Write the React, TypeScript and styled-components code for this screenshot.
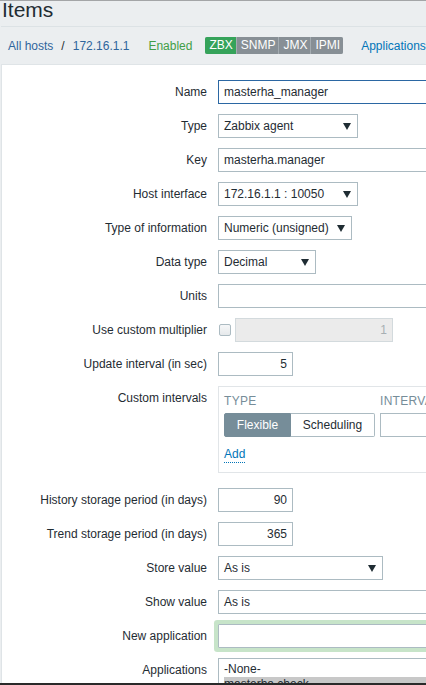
import React from 'react';
import styled, { createGlobalStyle } from 'styled-components';

const GlobalStyle = createGlobalStyle`
  html, body {
    margin: 0;
    padding: 0;
    background: #ebeef0;
    overflow: hidden;
  }
  body {
    font-family: "Liberation Sans", Arial, sans-serif;
    font-size: 12px;
    color: #1f2c33;
  }
`;

const Screen = styled.div`
  width: 426px;
  height: 683px;
  box-sizing: border-box;
  border-top: 1px solid #a3a5a7;
  background: #ebeef0;
  overflow: hidden;
  display: flex;
  flex-direction: column;
`;

const BottomEdge = styled.div`
  width: 426px;
  height: 2px;
  background: #2a2a2a;
`;

const PageHeader = styled.div`
  height: 25px;
  margin-left: 1px;
  border-bottom: 1px solid #dce2e5;
  flex-shrink: 0;
`;

const Title = styled.h1`
  margin: 0;
  padding-left: 1px;
  font-size: 21px;
  line-height: 17px;
  font-weight: normal;
  color: #1f2c33;
`;

const Breadcrumbs = styled.div`
  height: 37px;
  flex-shrink: 0;
  display: flex;
  align-items: center;
  padding-left: 8px;
  white-space: nowrap;
  & > * {
    flex-shrink: 0;
  }
`;

const Crumb = styled.a`
  color: #2f659c;
  text-decoration: none;
`;

const Separator = styled.span`
  margin: 0 8px;
  color: #1f2c33;
`;

const Status = styled.span`
  color: #429e47;
  margin-left: 19px;
`;

const BadgeGroup = styled.div`
  display: flex;
  margin-left: 13px;
  border-radius: 2px;
  overflow: hidden;
  background: #a4acb1;
`;

const Badge = styled.span<{ $active?: boolean }>`
  height: 17px;
  line-height: 17px;
  padding: 0 3px 0 4px;
  color: #fff;
  background: ${p => (p.$active ? '#35a35a' : '#878f95')};
  & + & {
    margin-left: 1px;
  }
`;

const NavLink = styled.a`
  margin-left: 18px;
  color: #0275b8;
  text-decoration: none;
`;

const Panel = styled.div`
  flex: 1;
  margin-left: 1px;
  background: #fff;
  border-left: 1px solid #dfe4e7;
  border-top: 1px solid #dfe4e7;
  padding-top: 15px;
`;

const Row = styled.div<{ $top?: boolean; $gap?: number }>`
  display: flex;
  align-items: ${p => (p.$top ? 'flex-start' : 'center')};
  margin-bottom: ${p => p.$gap ?? 10}px;
  white-space: nowrap;
`;

const Label = styled.label`
  width: 205px;
  flex-shrink: 0;
  margin-right: 11px;
  text-align: right;
  line-height: 24px;
  color: #1f2c33;
`;

const TextInput = styled.input<{ $w?: number; $right?: boolean; $focused?: boolean }>`
  box-sizing: border-box;
  flex-shrink: 0;
  height: 24px;
  width: ${p => (p.$w ? `${p.$w}px` : '480px')};
  padding: 0 5px;
  border: 1px solid ${p => (p.$focused ? '#2b67a3' : '#acbbc2')};
  background: #fff;
  font: inherit;
  color: #1f2c33;
  text-align: ${p => (p.$right ? 'right' : 'left')};
  outline: none;
  &:disabled {
    background: #ebebeb;
    border-color: #d3dadd;
    color: #a7afb3;
  }
`;

const GlowInput = styled(TextInput)`
  border-radius: 1px;
  box-shadow: 0 0 0 4px #c7e4c9;
`;

const Select = styled.div<{ $w?: number }>`
  box-sizing: border-box;
  flex-shrink: 0;
  height: 24px;
  width: ${p => (p.$w ? `${p.$w}px` : '480px')};
  display: flex;
  align-items: center;
  justify-content: space-between;
  padding: 0 6px 0 5px;
  border: 1px solid #acbbc2;
  background: #fff;
  color: #1f2c33;
`;

const Checkbox = styled.span`
  box-sizing: border-box;
  width: 12px;
  height: 12px;
  margin-left: 1px;
  border: 1px solid #acbbc2;
  border-radius: 2px;
  background: linear-gradient(#f6f7f8, #e6e9eb);
`;

const Spaced = styled.span`
  display: flex;
  margin-left: 4px;
`;

const IntervalBox = styled.div`
  box-sizing: border-box;
  width: 480px;
  flex-shrink: 0;
  border: 1px solid #e1e5e8;
  padding: 6px 5px 9px;
`;

const IntervalGrid = styled.div`
  display: grid;
  grid-template-columns: 151px 1fr;
  column-gap: 5px;
  row-gap: 4px;
`;

const ColHead = styled.div`
  line-height: 16px;
  color: #768d99;
  text-transform: uppercase;
  letter-spacing: 0.3px;
`;

const Segmented = styled.div`
  display: flex;
  height: 24px;
`;

const Segment = styled.span<{ $on?: boolean; $w: number }>`
  box-sizing: border-box;
  width: ${p => p.$w}px;
  height: 24px;
  line-height: 22px;
  text-align: center;
  border: 1px solid ${p => (p.$on ? '#768d99' : '#acbbc2')};
  background: ${p => (p.$on ? '#768d99' : '#fff')};
  color: ${p => (p.$on ? '#fff' : '#1f2c33')};
  &:first-child {
    border-radius: 2px 0 0 2px;
  }
  &:last-child {
    border-left: none;
    border-radius: 0 2px 2px 0;
  }
`;

const AddLink = styled.a`
  display: inline-block;
  margin-top: 10px;
  line-height: 15px;
  color: #0275b8;
  text-decoration: none;
  border-bottom: 1px dotted #0275b8;
`;

const ListBox = styled.div`
  box-sizing: border-box;
  width: 480px;
  height: 80px;
  flex-shrink: 0;
  border: 1px solid #acbbc2;
  padding: 3px 5px;
`;

const Option = styled.div<{ $selected?: boolean }>`
  line-height: 15px;
  background: ${p => (p.$selected ? '#c8c8c8' : 'transparent')};
`;

const Arrow = () => (
  <svg width="8" height="7" viewBox="0 0 8 7">
    <polygon points="0,0 8,0 4,7" fill="#1f2c33" />
  </svg>
);

const Dropdown: React.FC<{ value: string; w?: number; arrow?: boolean }> = ({ value, w, arrow = true }) => (
  <Select $w={w}>
    <span>{value}</span>
    {arrow && <Arrow />}
  </Select>
);

const App: React.FC = () => {
  return (
    <>
      <GlobalStyle />
      <Screen>
        <PageHeader>
          <Title>Items</Title>
        </PageHeader>
        <Breadcrumbs>
          <Crumb>All hosts</Crumb>
          <Separator>/</Separator>
          <Crumb>172.16.1.1</Crumb>
          <Status>Enabled</Status>
          <BadgeGroup>
            <Badge $active>ZBX</Badge>
            <Badge>SNMP</Badge>
            <Badge>JMX</Badge>
            <Badge>IPMI</Badge>
          </BadgeGroup>
          <NavLink>Applications</NavLink>
        </Breadcrumbs>
        <Panel>
          <Row>
            <Label>Name</Label>
            <TextInput $focused defaultValue="masterha_manager" />
          </Row>
          <Row>
            <Label>Type</Label>
            <Dropdown value="Zabbix agent" w={140} />
          </Row>
          <Row>
            <Label>Key</Label>
            <TextInput defaultValue="masterha.manager" />
          </Row>
          <Row>
            <Label>Host interface</Label>
            <Dropdown value="172.16.1.1 : 10050" w={140} />
          </Row>
          <Row>
            <Label>Type of information</Label>
            <Dropdown value="Numeric (unsigned)" w={134} />
          </Row>
          <Row>
            <Label>Data type</Label>
            <Dropdown value="Decimal" w={98} />
          </Row>
          <Row>
            <Label>Units</Label>
            <TextInput defaultValue="" />
          </Row>
          <Row>
            <Label>Use custom multiplier</Label>
            <Checkbox />
            <Spaced>
              <TextInput $w={158} $right disabled defaultValue="1" />
            </Spaced>
          </Row>
          <Row>
            <Label>Update interval (in sec)</Label>
            <TextInput $w={75} $right defaultValue="5" />
          </Row>
          <Row $top $gap={15}>
            <Label>Custom intervals</Label>
            <IntervalBox>
              <IntervalGrid>
                <ColHead>Type</ColHead>
                <ColHead>Interval</ColHead>
                <Segmented>
                  <Segment $on $w={67}>Flexible</Segment>
                  <Segment $w={84}>Scheduling</Segment>
                </Segmented>
                <TextInput $w={200} defaultValue="" />
              </IntervalGrid>
              <AddLink>Add</AddLink>
            </IntervalBox>
          </Row>
          <Row>
            <Label>History storage period (in days)</Label>
            <TextInput $w={75} $right defaultValue="90" />
          </Row>
          <Row>
            <Label>Trend storage period (in days)</Label>
            <TextInput $w={75} $right defaultValue="365" />
          </Row>
          <Row>
            <Label>Store value</Label>
            <Dropdown value="As is" w={165} />
          </Row>
          <Row>
            <Label>Show value</Label>
            <Dropdown value="As is" arrow={false} />
          </Row>
          <Row>
            <Label>New application</Label>
            <GlowInput defaultValue="" />
          </Row>
          <Row $top>
            <Label>Applications</Label>
            <ListBox>
              <Option>-None-</Option>
              <Option $selected>masterha.check</Option>
            </ListBox>
          </Row>
        </Panel>
      </Screen>
      <BottomEdge />
    </>
  );
};

export default App;
